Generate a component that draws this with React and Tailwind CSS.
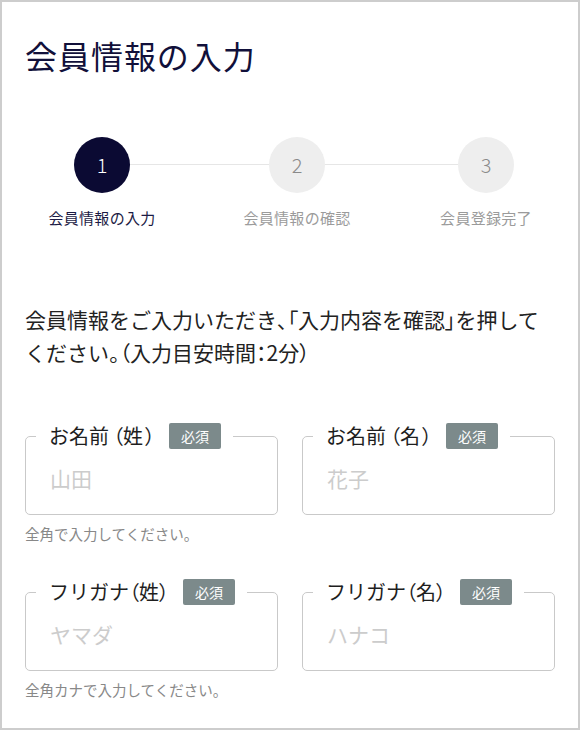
import React from "react";

const font = { fontFamily: '"Noto Sans CJK JP", "Noto Sans", sans-serif' };

function P({ children, className = "" }) {
  return (
    <span className={"[font-feature-settings:'palt'] " + className}>{children}</span>
  );
}

function Step({ num, label, active }) {
  return (
    <div className="flex flex-col items-center w-[56px] shrink-0">
      <div
        className={
          active
            ? "w-[56px] h-[56px] rounded-full bg-[#0b0a33] text-white flex items-center justify-center text-[20px] font-light"
            : "w-[56px] h-[56px] rounded-full bg-[#eeeeee] text-[#8a8a8a] flex items-center justify-center text-[20px] font-light"
        }
      >
        {num}
      </div>
      <div className="w-[56px] flex justify-center mt-[15px]">
        <span
          className={
            active
              ? "whitespace-nowrap text-[15px] leading-[20px] tracking-[0.02em] text-[#1c1b45]"
              : "whitespace-nowrap text-[15px] leading-[20px] tracking-[0.02em] text-[#9b9b9b]"
          }
        >
          {label}
        </span>
      </div>
    </div>
  );
}

function Field({ name, sub, placeholder, wide }) {
  return (
    <fieldset className="w-[253px] border border-[#c9c9c9] rounded-[5px] pl-[10px] pb-[21px]">
      <legend className="pl-[13px] pr-[12px] flex items-center gap-[14px] h-[26px]">
        <span className="text-[20px] leading-[26px] text-[#1e1e1e] whitespace-nowrap">
          {name}
          <P className={wide ? "ml-[4px]" : ""}>（</P>
          {sub}
          <P className={wide ? "ml-[2px]" : ""}>）</P>
        </span>
        <span className="h-[26px] w-[52px] rounded-[2px] bg-[#7c8a8b] text-white text-[14px] flex items-center justify-center">
          必須
        </span>
      </legend>
      <div className="pt-[14px] pl-[14px] text-[21px] leading-[30px] text-[#cccccc]">
        {placeholder}
      </div>
    </fieldset>
  );
}

export default function App() {
  return (
    <div
      style={font}
      className="w-[580px] h-[730px] box-border border-2 border-[#cdcdcd] bg-white overflow-hidden"
    >
      <div className="pl-[23px] pr-[23px] pt-[33px]">
        <h1 className="text-[32px] leading-[40px] tracking-[0.03em] text-[#11103a] font-normal">
          会員情報の入力
        </h1>
      </div>

      <div className="flex items-start pl-[72px] mt-[62px]">
        <Step num="1" label="会員情報の入力" active />
        <div className="w-[139px] h-px bg-[#e6e6e6] mt-[27px]" />
        <Step num="2" label="会員情報の確認" />
        <div className="w-[133px] h-px bg-[#e6e6e6] mt-[27px]" />
        <Step num="3" label="会員登録完了" />
      </div>

      <div className="pl-[23px] pr-[10px] mt-[75px]">
        <p className="text-[21px] leading-[33px] text-[#222222] whitespace-nowrap">
          会員情報をご入力いただき<P>、「</P>入力内容を確認<P>」</P>を押して
          <br />
          ください<P>。（</P>入力目安時間<P>：</P>2分<P>）</P>
        </p>
      </div>

      <div className="pl-[23px] mt-[54px]">
        <div className="flex gap-[24px]">
          <Field name="お名前" sub="姓" placeholder="山田" wide />
          <Field name="お名前" sub="名" placeholder="花子" wide />
        </div>
        <p className="mt-[9px] text-[14.5px] leading-[20px] text-[#888888]">
          全角で入力してください。
        </p>

        <div className="flex gap-[24px] mt-[35px]">
          <Field name="フリガナ" sub="姓" placeholder="ヤマダ" />
          <Field name="フリガナ" sub="名" placeholder="ハナコ" />
        </div>
        <p className="mt-[9px] text-[14.5px] leading-[20px] text-[#888888]">
          全角カナで入力してください。
        </p>
      </div>
    </div>
  );
}
